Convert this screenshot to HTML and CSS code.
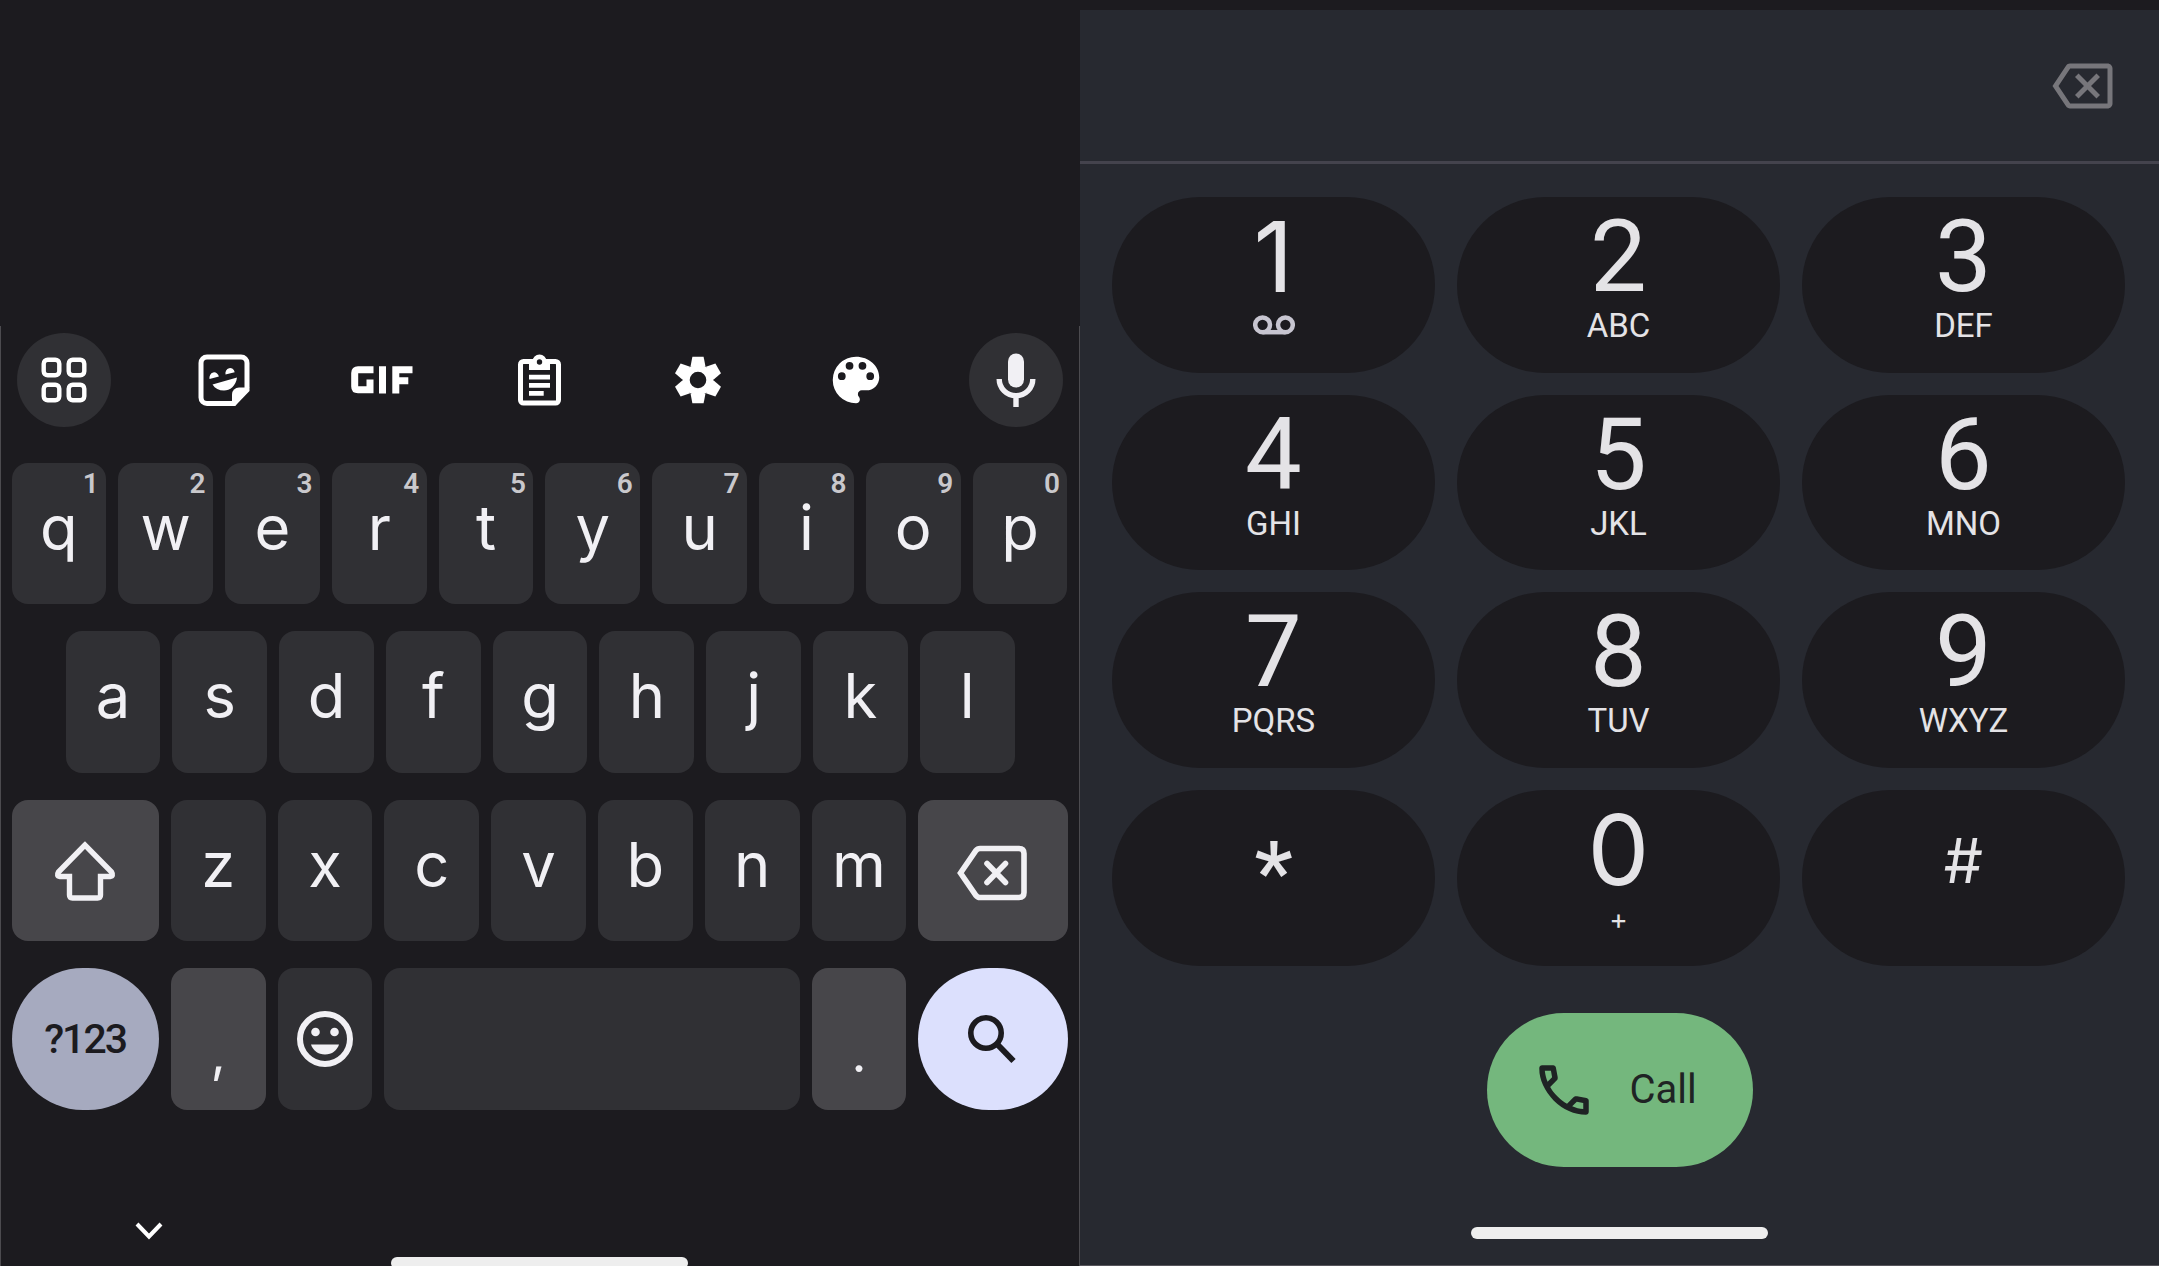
FILE: index.html
```
<!DOCTYPE html>
<html lang="en">
<head>
<meta charset="utf-8">
<title>Keyboard and dialer</title>
<link rel="stylesheet" href="styles.css">
</head>
<body>
<main class="screen">
  <section class="keyboard">
    <div class="toolbar">
      <span class="tool round"><svg width="46" height="46" viewBox="0 0 46 46" fill="none" stroke="#fff" stroke-width="4.4"><rect x="2.7" y="2.7" width="15.6" height="15.6" rx="4"/><rect x="27.7" y="2.7" width="15.6" height="15.6" rx="4"/><rect x="2.7" y="27.7" width="15.6" height="15.6" rx="4"/><rect x="27.7" y="27.7" width="15.6" height="15.6" rx="4"/></svg></span>
      <span class="tool"><svg width="52" height="53" viewBox="0 0 52 53"><path d="M9 3h34a6 6 0 0 1 6 6V36L36 49.500H9a6 6 0 0 1-6-6V9a6 6 0 0 1 6-6z" fill="none" stroke="#fff" stroke-width="5"/><path d="M51.500 33.500H41a7 7 0 0 0-7 7V52h3z" fill="#fff"/><path d="M11.500 25a4.700 5.300 0 0 1 9.400-2.400zM27.500 20.500a4.700 5.300 0 0 1 9.200-2.300zM14.500 30.500L39 23.500C38 32 32 36.500 26 36.500c-5 0-9-2-11.500-6z" fill="#fff"/></svg></span>
      <span class="tool"><svg width="62" height="28" viewBox="0 0 62 28" fill="none" stroke="#fff" stroke-width="7"><path d="M22.500 3.700H7Q3.700 3.700 3.700 7v13.500q0 3.300 3.300 3.300h12V13.500M31.500 .2v27.300M44.800 27.500V3.700h16.700M45 14.800h12.300"/></svg></span>
      <span class="tool"><svg width="43" height="52" viewBox="0 0 43 52"><path d="M5.500 7.500h32a3 3 0 0 1 3 3v35.500a3 3 0 0 1-3 3h-32a3 3 0 0 1-3-3V10.500a3 3 0 0 1 3-3z" fill="none" stroke="#fff" stroke-width="5"/><path d="M11 16V7.500h3.500a7 7 0 0 1 14 0H32V16z" fill="#fff"/><circle cx="21.500" cy="8" r="2.700" fill="#1c1b1f"/><path d="M11 23.200h21M11 31.300h21M11 39.400h14.700" stroke="#fff" stroke-width="4.800"/></svg></span>
      <span class="tool"><svg width="48" height="48" viewBox="-24 -24 48 48" fill="#fff"><circle r="11.800" fill="none" stroke="#fff" stroke-width="7"/><g id="t"><path id="tooth" d="M-5.600-23.300H5.600L7.500-13.500h-15z"/><use href="#tooth" transform="rotate(60)"/><use href="#tooth" transform="rotate(120)"/></g><use href="#t" transform="rotate(180)"/></svg></span>
      <span class="tool"><svg width="62" height="62" viewBox="0 0 24 24" fill="#fff"><path d="M12 3a9 9 0 0 0 0 18c.83 0 1.500-.67 1.500-1.500 0-.39-.15-.74-.39-1.010-.23-.26-.38-.61-.38-.99 0-.83.67-1.500 1.500-1.500H16c2.760 0 5-2.240 5-5 0-4.420-4.030-8-9-8zm-5.500 9a1.500 1.500 0 1 1 0-3 1.500 1.500 0 0 1 0 3zm3-4a1.500 1.500 0 1 1 0-3 1.500 1.500 0 0 1 0 3zm5 0a1.500 1.500 0 1 1 0-3 1.500 1.500 0 0 1 0 3zm3 4a1.500 1.500 0 1 1 0-3 1.500 1.500 0 0 1 0 3z"/></svg></span>
      <span class="tool round"><svg width="40" height="54" viewBox="0 0 40 54"><rect x="12" y="0.500" width="16" height="34" rx="8" fill="#f1f0f4"/><path d="M3.200 26a16.800 16.800 0 0 0 33.600 0M20 43v11" fill="none" stroke="#f1f0f4" stroke-width="5.400"/></svg></span>
    </div>
    <div class="row">
      <span class="key">q<small>1</small></span><span class="key">w<small>2</small></span><span class="key">e<small>3</small></span><span class="key">r<small>4</small></span><span class="key">t<small>5</small></span><span class="key">y<small>6</small></span><span class="key">u<small>7</small></span><span class="key">i<small>8</small></span><span class="key">o<small>9</small></span><span class="key">p<small>0</small></span>
    </div>
    <div class="row inset">
      <span class="key">a</span><span class="key">s</span><span class="key">d</span><span class="key">f</span><span class="key">g</span><span class="key">h</span><span class="key">j</span><span class="key">k</span><span class="key">l</span>
    </div>
    <div class="row">
      <span class="key wide dim"><svg width="62" height="60" viewBox="0 0 62 60"><path d="M31 4L4.500 31Q2 35 6 35.500H15.500V54Q15.500 57 18.500 57H43.500Q46.500 57 46.500 54V35.500H56Q60 35 57.500 31z" fill="none" stroke="#f1f0f4" stroke-width="5.400"/></svg></span>
      <span class="key">z</span><span class="key">x</span><span class="key">c</span><span class="key">v</span><span class="key">b</span><span class="key">n</span><span class="key">m</span>
      <span class="key wide dim delete"><svg width="70" height="56" viewBox="0 0 70 56" fill="none" stroke="#f1f0f4" stroke-width="5.600"><path d="M23 3.500H62Q67 3.500 67 8.500V47.500Q67 52.500 62 52.500H23Q20.500 52.500 19 50.500L3.500 28 19 5.500Q20.500 3.500 23 3.500z"/><path d="M30 18.500l18.500 19M48.500 18.500L30 37.500" stroke-linecap="round"/></svg></span>
    </div>
    <div class="row">
      <span class="key wide symbols">?123</span>
      <span class="key dim punct">,</span>
      <span class="key emoji"><svg width="58" height="58" viewBox="0 0 58 58" fill="#f1f0f4"><circle cx="29" cy="29" r="25" fill="none" stroke="#f1f0f4" stroke-width="6"/><circle cx="19.500" cy="22" r="4.300"/><circle cx="38.500" cy="22" r="4.300"/><path d="M15 34.500h28C41 40.500 36 44.500 29 44.500S17 40.500 15 34.500z"/></svg></span>
      <span class="key space"></span>
      <span class="key dim punct">.</span>
      <span class="key wide search"><svg width="50" height="50" viewBox="0 0 50 50" fill="none" stroke="#1c1b1f"><circle cx="19" cy="19" r="15.200" stroke-width="5.600"/><path d="M30 30L46.500 47" stroke-width="6"/></svg></span>
    </div>
    <div class="system">
      <svg width="28" height="18" viewBox="0 0 28 18" fill="none" stroke="#fff" stroke-width="4"><path d="M2 2l12 12.500L26 2"/></svg>
      <span class="handle"></span>
    </div>
  </section>
  <section class="dialer">
    <div class="number"><svg width="61" height="60" viewBox="0 0 24 24" fill="#77767b"><path d="M22 3H7c-.69 0-1.230.35-1.590.88L0 12l5.410 8.110c.36.53.9.89 1.590.89h15c1.100 0 2-.9 2-2V5c0-1.100-.9-2-2-2zm0 16H7.070L2.400 12l4.660-7H22v14zm-11.590-2L14 13.410 17.590 17 19 15.590 15.410 12 19 8.410 17.590 7 14 10.590 10.410 7 9 8.410 12.590 12 9 15.590z"/></svg></div>
    <div class="pad">
      <span class="num one">1<small><svg width="42" height="20" viewBox="0 0 42 20" fill="none" stroke="#c7c5d0" stroke-width="4.500"><circle cx="9.600" cy="9.800" r="7.400"/><circle cx="32.400" cy="9.800" r="7.400"/><path d="M9.600 17.200H32.400"/></svg></small></span>
      <span class="num">2<small>ABC</small></span>
      <span class="num">3<small>DEF</small></span>
      <span class="num">4<small>GHI</small></span>
      <span class="num">5<small>JKL</small></span>
      <span class="num">6<small>MNO</small></span>
      <span class="num">7<small>PQRS</small></span>
      <span class="num">8<small>TUV</small></span>
      <span class="num">9<small>WXYZ</small></span>
      <span class="num star">*</span>
      <span class="num zero">0<small>+</small></span>
      <span class="num hash">#</span>
    </div>
    <div class="call"><svg width="66" height="66" viewBox="0 0 24 24" fill="#1f2324"><path d="M19.950 21q-3.125 0-6.175-1.363T8.225 15.775 4.362 10.225 3 4.050q0-.45.3-.75T4.050 3H8.100q.35 0 .625.238t.325.562l.65 3.500q.05.4-.025.675T9.400 8.450L6.975 10.900q.5.925 1.187 1.787t1.513 1.663q.775.775 1.625 1.438T13.100 17l2.350-2.350q.225-.225.588-.338t.712-.062l3.450.7q.35.1.575.363T21 15.900v4.050q0 .45-.3.75t-.75.3zM6.025 9l1.650-1.650L7.250 5H5.025q.125 1.025.35 2.025T6.025 9zm8.950 8.950q.975.425 1.988.675T19 18.950v-2.200l-2.350-.475-1.675 1.675z"/></svg><span>Call</span></div>
    <span class="handle"></span>
  </section>
</main>
</body>
</html>
```
FILE: styles.css
```
* { box-sizing: border-box; }
body { margin: 0; background: #1c1b1f; }
svg { display: block; flex: none; }
.screen {
  display: flex;
  align-items: flex-end;
  width: 2159px;
  height: 1266px;
  overflow: hidden;
  font-family: Inter, "Liberation Sans", sans-serif;
}
.keyboard {
  display: flex;
  flex-direction: column;
  gap: 27px;
  width: 1080px;
  height: 940px;
  padding: 7px 11.500px 0 10.500px;
  border-left: 1px solid #4c4b4f;
  border-right: 1px solid #4c4b4f;
}
.toolbar {
  display: flex;
  flex: none;
  gap: 64px;
  height: 94px;
  margin: 0 4.500px 9px 5.500px;
}
.tool {
  display: flex;
  align-items: center;
  justify-content: center;
  width: 94px;
  height: 94px;
}
.round { border-radius: 50%; background: #303034; }
.tool:first-child { margin-right: 1.500px; }
.tool:last-child { margin-left: auto; }
.row { display: flex; flex: none; gap: 12px; height: 141.400px; }
.inset { padding: 0 54px; }
.key {
  position: relative;
  display: flex;
  align-items: center;
  justify-content: center;
  flex: 0 0 94.800px;
  border-radius: 16px;
  background: #303034;
  color: #f1f0f4;
  font-size: 61.500px;
  line-height: 1;
  padding-bottom: 12px;
}
.key small {
  position: absolute;
  top: 7px;
  right: 7.500px;
  color: #c9c8cc;
  font: 600 28px/1 Roboto, sans-serif;
}
.wide { flex: 1 1 0; padding: 1px 0 0; }
.delete { padding: 5px 2px 0 0; }
.dim { background: #47464a; }
.emoji { padding: 0; }
.space { flex-basis: 415.200px; }
.punct { padding: 31px 0 0; font-size: 52px; }
.symbols {
  border-radius: 71px;
  background: #a6aabf;
  color: #1c1b1f;
  font: 500 41px/1 Roboto, sans-serif;
  letter-spacing: -2px;
}
.search { border-radius: 71px; background: #dce0fd; padding: 0 2px 0 0; }
.system {
  display: flex;
  flex-direction: column;
  flex: none;
  padding: 85px 0 0 123px;
}
.handle {
  width: 297px;
  height: 12px;
  border-radius: 6px;
  background: #eee;
}
.system .handle { margin: 17px 0 0 256px; flex: none; }
.dialer {
  display: flex;
  flex-direction: column;
  align-items: center;
  width: 1079px;
  height: 1256px;
  background: #272930;
  border-bottom: 1px solid #56545b;
}
.number {
  display: flex;
  justify-content: flex-end;
  align-self: stretch;
  height: 154px;
  padding: 46px 46px 0 0;
  border-bottom: 3px solid #44434d;
}
.pad {
  display: grid;
  grid-template-columns: repeat(3, 323px);
  grid-auto-rows: 175.700px;
  gap: 22px;
  align-self: flex-start;
  margin: 33px 0 0 32px;
}
.num {
  display: flex;
  flex-direction: column;
  align-items: center;
  border-radius: 88px;
  background: #1c1b1f;
  color: #e4e3e6;
  padding-top: 10px;
  font: 400 101px/100px Roboto, sans-serif;
}
.num small {
  height: 40px;
  margin-top: -1px;
  font-size: 33px;
  line-height: 40px;
  color: #e4e3e6;
}
.num small svg { margin-top: 9px; }
.zero, .one { font-family: Inter, sans-serif; font-size: 98px; }
.zero small { font-size: 28px; }
.star { font-size: 86px; font-weight: 500; padding-top: 33px; }
.hash { font-family: Inter, sans-serif; font-size: 62px; padding-top: 21px; }
.call {
  display: flex;
  align-items: center;
  gap: 33px;
  width: 266px;
  height: 154px;
  margin-top: 47px;
  padding-left: 44px;
  border-radius: 77px;
  background: #74b77d;
  color: #1f2324;
  font: 400 40px/1 Roboto, sans-serif;
}
.dialer .handle { margin-top: 60px; }
```
